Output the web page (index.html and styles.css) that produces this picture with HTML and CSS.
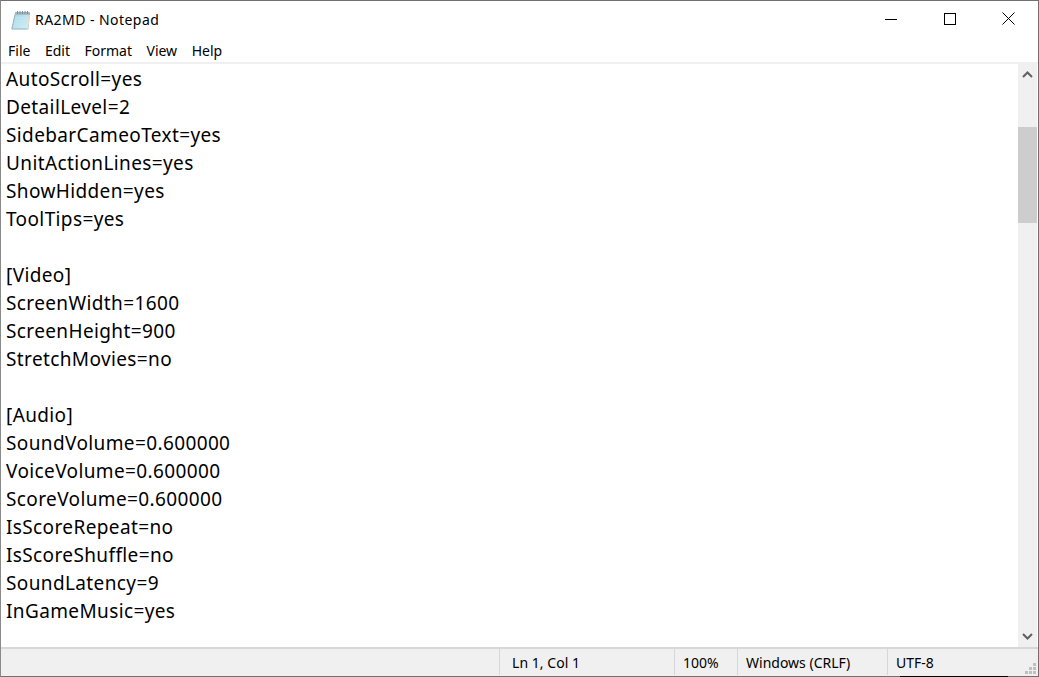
FILE: index.html
```html
<!DOCTYPE html>
<html lang="en">
<head>
<meta charset="utf-8">
<title>RA2MD - Notepad</title>
<link rel="stylesheet" href="styles.css">
</head>
<body>
<div class="window">
  <header class="titlebar">
    <svg class="app-icon" width="20" height="20" viewBox="0 0 20 20">
      <defs><linearGradient id="pg" x1="0" y1="0" x2="1" y2="1"><stop offset="0" stop-color="#9ed6e8"/><stop offset="1" stop-color="#d8f0f6"/></linearGradient></defs>
      <path d="M4.500 2.500h14l-1.500 16.500H.8z" fill="url(#pg)" stroke="#8fb0ba" stroke-width="1"/>
      <path d="M4.500 2.500h14l-.3 2.500H4.200z" fill="#a9bcc4"/>
      <path d="M6.500 1v3M9 1v3M11.500 1v3M14 1v3M16.500 1v3" stroke="#7d8e95" stroke-width="1"/>
      <path d="M4 8h12.500M3.500 11h12.500M3 14h12.500" stroke="#c4e8f1" stroke-width="1"/>
      <path d="M18.100 5l-1.400 14" stroke="#eadfc6" stroke-width="1.500"/>
    </svg>
    <span class="title">RA2MD - Notepad</span>
    <div class="controls">
      <div class="control"><svg width="12" height="12" viewBox="0 0 12 12"><path d="M0 6.500h12" stroke="#000" fill="none"/></svg></div>
      <div class="control"><svg width="12" height="12" viewBox="0 0 12 12"><rect x=".5" y=".5" width="11" height="11" stroke="#000" fill="none"/></svg></div>
      <div class="control"><svg width="13" height="13" viewBox="0 0 13 13"><path d="M.5.500l12 12M12.500.500l-12 12" stroke="#000" fill="none"/></svg></div>
    </div>
  </header>
  <nav class="menubar">
    <span>File</span><span>Edit</span><span>Format</span><span>View</span><span>Help</span>
  </nav>
  <main class="body">
    <div class="editor">
      <div>AutoScroll=yes</div>
      <div>DetailLevel=2</div>
      <div>SidebarCameoText=yes</div>
      <div>UnitActionLines=yes</div>
      <div>ShowHidden=yes</div>
      <div>ToolTips=yes</div>
      <div class="blank"></div>
      <div>[Video]</div>
      <div>ScreenWidth=1600</div>
      <div>ScreenHeight=900</div>
      <div>StretchMovies=no</div>
      <div class="blank"></div>
      <div>[Audio]</div>
      <div>SoundVolume=0.600000</div>
      <div>VoiceVolume=0.600000</div>
      <div>ScoreVolume=0.600000</div>
      <div>IsScoreRepeat=no</div>
      <div>IsScoreShuffle=no</div>
      <div>SoundLatency=9</div>
      <div>InGameMusic=yes</div>
    </div>
    <div class="scrollbar">
      <svg class="arrow" width="11" height="7" viewBox="0 0 11 7"><path d="M1 6l4.500-4.500L10 6" stroke="#606060" stroke-width="2" fill="none"/></svg>
      <div class="track"><div class="thumb"></div></div>
      <svg class="arrow" width="11" height="7" viewBox="0 0 11 7"><path d="M1 1l4.500 4.500L10 1" stroke="#606060" stroke-width="2" fill="none"/></svg>
    </div>
  </main>
  <footer class="statusbar">
    <div class="cell spacer"></div>
    <div class="cell pos">Ln 1, Col 1</div>
    <div class="cell zoom">100%</div>
    <div class="cell eol">Windows (CRLF)</div>
    <div class="cell enc">UTF-8</div>
    <div class="grip">
      <svg width="12" height="12" viewBox="0 0 12 12" fill="#c0c0c0"><rect x="9" y="0" width="3" height="3"/><rect x="5" y="4" width="3" height="3"/><rect x="9" y="4" width="3" height="3"/><rect x="1" y="8" width="3" height="3"/><rect x="5" y="8" width="3" height="3"/><rect x="9" y="8" width="3" height="3"/></svg>
    </div>
  </footer>
  <div class="edge-shadow"></div>
</div>
</body>
</html>
```
FILE: styles.css
```css
* { box-sizing: border-box; }
html, body { margin: 0; height: 100%; }
body { background: #fff; overflow: hidden; font-family: "Noto Sans", "Open Sans", sans-serif; color: #000; }
.window {
  position: relative;
  width: 1039px; height: 677px;
  display: flex; flex-direction: column;
  border-top: 1px solid #707070;
  border-right: 1px solid #707070;
  border-bottom: 1px solid #707070;
  border-left: 1px solid #8a8a8a;
  background: #fff;
}
.edge-shadow { position: absolute; left: 899px; bottom: -1px; width: 108px; height: 1px; background: #000; }
.titlebar { height: 37px; display: flex; align-items: center; padding-left: 10px; flex: none; }
.app-icon { flex: none; }
.title { margin-left: 4px; font-size: 14px; letter-spacing: .45px; color: #000; }
.controls { margin-left: auto; display: flex; align-self: stretch; padding-bottom: 2px; }
.control { width: 59px; display: flex; align-items: center; justify-content: center; }
.menubar { height: 24px; flex: none; display: flex; align-items: center; gap: 14.5px; padding-left: 7px; font-size: 14px; }
.body { flex: 1; min-height: 0; display: flex; border-top: 2px solid #f0f0f0; }
.editor { flex: 1; min-width: 0; padding-left: 5px; padding-top: 1px; font-size: 19px; letter-spacing: .38px; line-height: 28px; overflow: hidden; white-space: nowrap; }
.blank { height: 28px; }
.scrollbar { width: 19px; margin-right: 1px; flex: none; background: #f0f0f0; display: flex; flex-direction: column; align-items: center; padding: 7px 0; }
.arrow { flex: none; }
.track { flex: 1; align-self: stretch; margin-top: 49px; }
.thumb { height: 96px; background: #cdcdcd; }
.statusbar { height: 29px; flex: none; display: flex; align-items: stretch; background: #f0f0f0; border-top: 2px solid #d7d7d7; font-size: 14px; padding-bottom: 1px; }
.cell { display: flex; align-items: center; padding-left: 12px; border-right: 1px solid #d7d7d7; }
.spacer { width: 499px; }
.pos { width: 175px; letter-spacing: .05px; }
.zoom { width: 63px; padding-left: 8px; }
.eol { width: 150px; padding-left: 8px; }
.enc { border-right: 0; flex: 1; padding-left: 8px; }
.grip { display: flex; align-items: flex-end; justify-content: flex-end; width: 20px; padding: 0 2px 0 0; }
```
